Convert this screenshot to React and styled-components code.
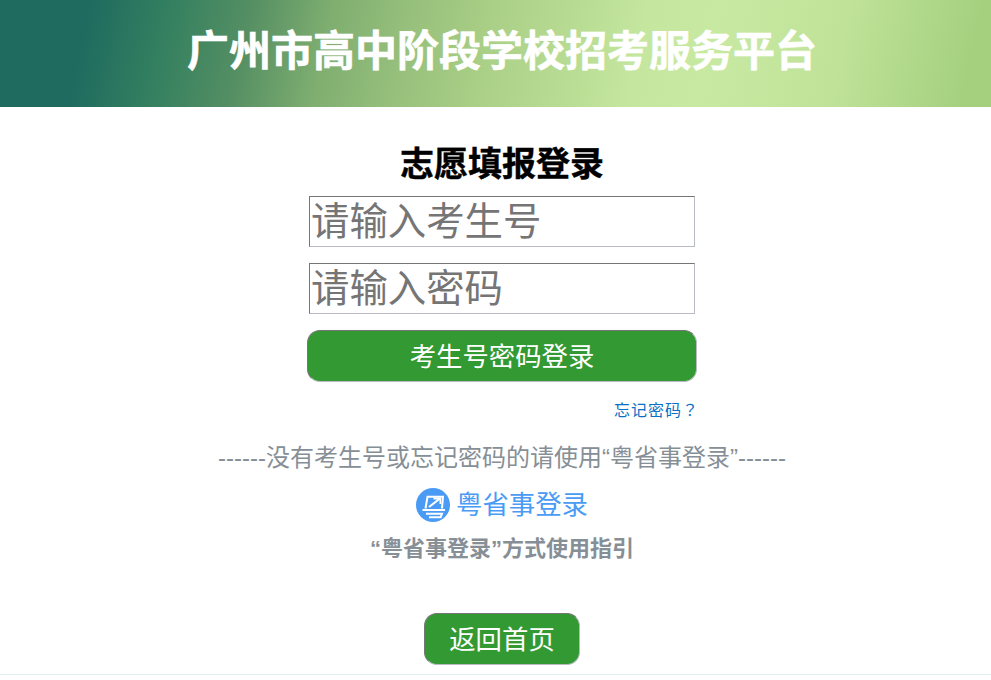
import React from "react";
import styled, { createGlobalStyle } from "styled-components";

const Global = createGlobalStyle`
  html, body { margin: 0; padding: 0; background: #fff; }
  body { font-family: "Liberation Sans", "Noto Sans CJK SC", sans-serif; }
  input::placeholder { color: #757575; opacity: 1; }
`;
const Page = styled.div`
  height: 680px;
  overflow: hidden;
  display: flex;
  flex-direction: column;
  box-sizing: border-box;
`;
const Banner = styled.header`
  height: 107px;
  flex: none;
  display: flex;
  align-items: center;
  justify-content: center;
  padding: 0 0 4px 13px;
  box-sizing: border-box;
  background: linear-gradient(102deg, #1f6b5f 9%, #348060 17%, #558f63 25%, #7fae70 33%, #97c07c 41%, #aacf86 49%, #c4e69e 64%, #c8e9a2 71%, #bfe298 84%, #a5d17f 97%);
`;
const BannerTitle = styled.h1`
  margin: 0;
  font-size: 42px;
  line-height: 52px;
  font-weight: 700;
  color: #fff;
  white-space: nowrap;
  -webkit-text-stroke: 0.6px #fff;
`;
const Content = styled.main`
  display: flex;
  flex-direction: column;
  align-items: center;
  padding-left: 13px;
`;
const Heading = styled.h2`
  margin: 37px 0 0;
  font-size: 34px;
  line-height: 40px;
  font-weight: 700;
  color: #000;
  -webkit-text-stroke: 0.4px #000;
`;
const Form = styled.form`
  width: 390px;
  margin-top: 12px;
  display: flex;
  flex-direction: column;
  align-items: center;
`;
const Field = styled.input`
  width: 386px;
  height: 51px;
  box-sizing: border-box;
  margin-bottom: 16px;
  padding: 0 1px;
  border-style: solid;
  border-width: 1px;
  border-color: #767676 #b8bcc2 #b8bcc2 #767676;
  border-radius: 0;
  outline: none;
  font-family: inherit;
  font-size: 38.4px;
`;
const GreenButton = styled.button`
  height: 52px;
  width: ${(p) => p.$width}px;
  box-sizing: border-box;
  padding: 0 0 3px;
  border: 1px solid;
  border-color: #767676 #b8bcc2 #b8bcc2 #767676;
  border-radius: 13px;
  background: #339933;
  color: #fff;
  font-family: inherit;
  font-size: 26.4px;
`;
const ForgotRow = styled.div`
  width: 394px;
  margin-top: 18px;
  text-align: right;
  font-size: 16px;
  line-height: 18px;
`;
const ForgotLink = styled.a`
  color: #0b6fc4;
  text-decoration: none;
  letter-spacing: 1px;
  font-family: "Noto Sans CJK TC", sans-serif;
`;
const Notice = styled.p`
  margin: 25px 0 0;
  font-size: 24px;
  line-height: 26px;
  color: #868e96;
  white-space: nowrap;
`;
const AltLogin = styled.a`
  margin-top: 16px;
  display: flex;
  align-items: center;
  gap: 6px;
  font-size: 26.4px;
  line-height: 36px;
  color: #4a9bf5;
  text-decoration: none;
`;
const Guide = styled.a`
  margin-top: 11px;
  font-size: 22px;
  line-height: 30px;
  font-weight: 700;
  color: #868e96;
  text-decoration: none;
`;
const HomeWrap = styled.div`
  margin-top: 49px;
`;
const Rule = styled.div`
  flex: none;
  margin-top: 9px;
  border-top: 1px solid #e4eef5;
`;

const Logo = () => (
  <svg width="34" height="34" viewBox="0 0 34 34" aria-hidden="true">
    <circle cx="17" cy="17" r="17" fill="#4a9bf5" />
    <g fill="none" stroke="#fff">
      <path d="M9.5 20.5L11.5 8.8H27L26 20.5" strokeWidth="2" />
      <path d="M13 19L24 10.5" strokeWidth="2.2" />
      <path d="M17.5 10.5H24.4V16" strokeWidth="1.8" />
      <path d="M6.5 22H29" strokeWidth="2" />
      <path d="M10 25.8H26L24.6 29.2H13" strokeWidth="2" />
    </g>
  </svg>
);

export default function App() {
  return (
    <Page>
      <Global />
      <Banner>
        <BannerTitle>广州市高中阶段学校招考服务平台</BannerTitle>
      </Banner>
      <Content>
        <Heading>志愿填报登录</Heading>
        <Form onSubmit={(e) => e.preventDefault()}>
          <Field placeholder="请输入考生号" />
          <Field type="password" placeholder="请输入密码" />
          <GreenButton $width={390}>考生号密码登录</GreenButton>
          <ForgotRow>
            <ForgotLink href="#">忘记密码？</ForgotLink>
          </ForgotRow>
        </Form>
        <Notice>------没有考生号或忘记密码的请使用“粤省事登录”------</Notice>
        <AltLogin href="#">
          <Logo />
          粤省事登录
        </AltLogin>
        <Guide href="#">“粤省事登录”方式使用指引</Guide>
        <HomeWrap>
          <GreenButton $width={156}>返回首页</GreenButton>
        </HomeWrap>
      </Content>
      <Rule />
    </Page>
  );
}
